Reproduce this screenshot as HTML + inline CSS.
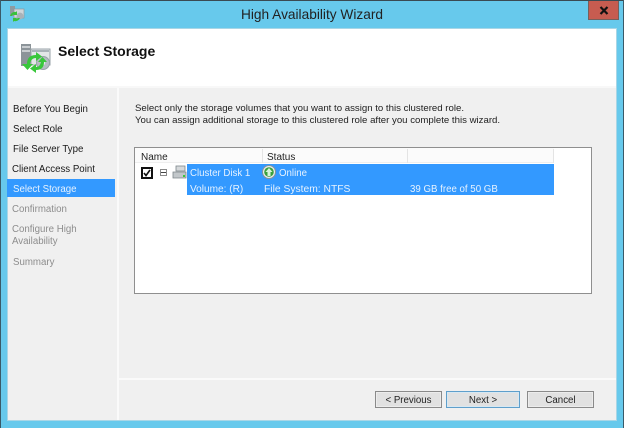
<!DOCTYPE html>
<html><head><meta charset="utf-8"><style>
html,body{margin:0;padding:0}
body{width:624px;height:428px;position:relative;overflow:hidden;background:#67c9ec;font-family:"Liberation Sans",sans-serif;font-size:9.7px;color:#1a1a1a}
#r{position:absolute;left:0;top:0;width:624px;height:428px;filter:blur(.35px)}
div{position:absolute;box-sizing:border-box;white-space:nowrap}
.nav{left:13px;line-height:12px}
.g{color:#8d8d8d}
.btn{top:391px;height:17px;background:#e1e1e1;border:1px solid #8a8a8a;box-shadow:inset 0 0 0 1px #ececec;text-align:center;line-height:17px;color:#222}
.w{color:#e6f2ff}
</style></head><body><div id="r">
<div style="left:0;top:0;width:624px;height:1px;background:#3a4a52"></div>
<div style="left:0;top:0;width:1px;height:428px;background:#3a5a68"></div>
<div style="left:623px;top:0;width:1px;height:428px;background:#3a5a68"></div>
<div style="left:0;top:7px;width:624px;text-align:center;font-size:13.7px;line-height:16px;color:#222">High Availability Wizard</div>
<svg style="position:absolute;left:8px;top:4px" width="17" height="18" viewBox="0 0 17 18">
<rect x="2" y="2" width="5" height="10" fill="#8f9aa0"/><rect x="6" y="5" width="10" height="9" fill="#cfd6da" stroke="#8c979d" stroke-width=".7"/>
<circle cx="12" cy="12" r="3.4" fill="#a9b2b8"/>
<path d="M2 12a5 5 0 0 1 6-4l1-1v4H5l1-1a3 3 0 0 0-2 2zM12 14a5 5 0 0 1-6 3l-1 1v-4h4l-1 1a3 3 0 0 0 2-1z" fill="#37c23a"/></svg>
<div style="left:588px;top:1px;width:31px;height:19px;background:#c75c50;border:1px solid #76605c;border-top:0"></div>
<svg style="position:absolute;left:599px;top:6px" width="10" height="9" viewBox="0 0 10 9"><path d="M1.5 1L8.5 8M8.5 1L1.5 8" stroke="#111" stroke-width="2.2"/></svg>
<div style="left:7px;top:28px;width:610px;height:393px;background:#f0f0f0;border:1px solid #a9d6e6"></div>
<div style="left:8px;top:29px;width:608px;height:57px;background:#fff"></div>
<div style="left:8px;top:86px;width:608px;height:2px;background:#f8f8f8"></div>
<svg style="position:absolute;left:19px;top:42px" width="34" height="32" viewBox="0 0 34 32">
<rect x="2" y="2" width="10" height="22" fill="#8c9499"/><rect x="3" y="4" width="8" height="2" fill="#c9cdd0"/><rect x="3" y="8" width="8" height="2" fill="#c9cdd0"/>
<rect x="12" y="7" width="19" height="16" fill="#e3e6e8" stroke="#9aa3a8"/><rect x="13" y="8" width="17" height="2" fill="#a9b2b8"/>
<circle cx="24" cy="21" r="6.5" fill="#b4bcc2" stroke="#98a1a7"/><circle cx="24" cy="21" r="2.2" fill="#e6e9eb"/>
<path d="M8 22 Q8 13 17 13 L17 10 L23 14.5 L17 19 L17 16 Q12 16 11 22 L14 22 L8.5 28 L3 22Z" fill="#39c73b"/>
<path d="M26 20 Q26 28 18 28 L18 31 L12 26.5 L18 22 L18 25 Q22 25 23 20 L20 20 L24.5 15 L29 20Z" fill="#39c73b" transform="translate(-1 0)"/>
</svg>
<div style="left:58px;top:43px;font-size:14px;font-weight:bold;line-height:16px;color:#111">Select Storage</div>
<div style="left:117px;top:88px;width:2px;height:332px;background:#fafafa"></div>
<div class="nav" style="top:104px">Before You Begin</div>
<div class="nav" style="top:124px">Select Role</div>
<div class="nav" style="top:144px">File Server Type</div>
<div class="nav" style="top:164px;left:12px">Client Access Point</div>
<div style="left:7px;top:179px;width:108px;height:18px;background:#3399ff"></div>
<div class="nav w" style="top:184px">Select Storage</div>
<div class="nav g" style="top:204px;left:12px">Confirmation</div>
<div class="nav g" style="top:224px;left:12px">Configure High</div>
<div class="nav g" style="top:236px;left:12px">Availability</div>
<div class="nav g" style="top:257px">Summary</div>
<div style="left:135px;top:103px;line-height:12px;color:#222;font-size:9.65px">Select only the storage volumes that you want to assign to this clustered role.</div>
<div style="left:135px;top:115px;line-height:12px;color:#222;font-size:9.65px">You can assign additional storage to this clustered role after you complete this wizard.</div>
<div style="left:134px;top:147px;width:458px;height:147px;background:#fff;border:1px solid #8f8f8f"></div>
<div style="left:135px;top:148px;width:419px;height:15px;background:#fbfbfb;border-bottom:1px solid #eee"></div>
<div style="left:262px;top:149px;width:1px;height:14px;background:#e4e4e4"></div>
<div style="left:407px;top:149px;width:1px;height:14px;background:#e4e4e4"></div>
<div style="left:553px;top:149px;width:1px;height:14px;background:#e4e4e4"></div>
<div style="left:141px;top:152px;line-height:12px;color:#222;font-size:10px">Name</div>
<div style="left:267px;top:152px;line-height:12px;color:#222;font-size:10px">Status</div>
<div style="left:187px;top:164px;width:367px;height:31px;background:#3399ff"></div>
<div style="left:141px;top:167px;width:12px;height:12px;background:#fff;border:2px solid #111"></div>
<svg style="position:absolute;left:143px;top:169px" width="8" height="8" viewBox="0 0 8 8"><path d="M1 4L3 6.5L7 1" fill="none" stroke="#111" stroke-width="1.6"/></svg>
<div style="left:160px;top:169px;width:7px;height:7px;border:1px solid #8a8a8a;background:#fff"></div>
<div style="left:161px;top:172px;width:5px;height:1px;background:#444"></div>
<svg style="position:absolute;left:172px;top:165px" width="15" height="14" viewBox="0 0 15 14"><rect x="4" y="1" width="9" height="5" fill="#d6d9db" stroke="#7d868b" stroke-width=".8"/><path d="M1 7h13v6H1z" fill="#c2c7ca" stroke="#7d868b" stroke-width=".8"/><rect x="11" y="10" width="2" height="2" fill="#39c73b"/></svg>
<div class="w" style="left:190px;top:167px;line-height:13px">Cluster Disk 1</div>
<div class="w" style="left:190px;top:183px;line-height:13px;font-size:10.1px">Volume: (R)</div>
<svg style="position:absolute;left:262px;top:165px" width="14" height="14" viewBox="0 0 14 14"><circle cx="7" cy="7" r="6.5" fill="#e8eef0" stroke="#88939a"/><circle cx="7" cy="7" r="4.8" fill="#3aa03c"/><path d="M7 3L10.5 7H8.5V11H5.5V7H3.5Z" fill="#d8f5d8"/></svg>
<div class="w" style="left:279px;top:167px;line-height:13px">Online</div>
<div class="w" style="left:264px;top:183px;line-height:13px;font-size:10.3px">File System: NTFS</div>
<div class="w" style="left:410px;top:183px;line-height:13px">39 GB free of 50 GB</div>
<div style="left:119px;top:378px;width:497px;height:2px;background:#fafafa"></div>
<div class="btn" style="left:375px;width:67px">&lt; Previous</div>
<div class="btn" style="left:446px;width:74px;border-color:#5f9fcb;box-shadow:inset 0 0 0 1px #d8e8f2">Next &gt;</div>
<div class="btn" style="left:527px;width:67px">Cancel</div>
</div></body></html>
